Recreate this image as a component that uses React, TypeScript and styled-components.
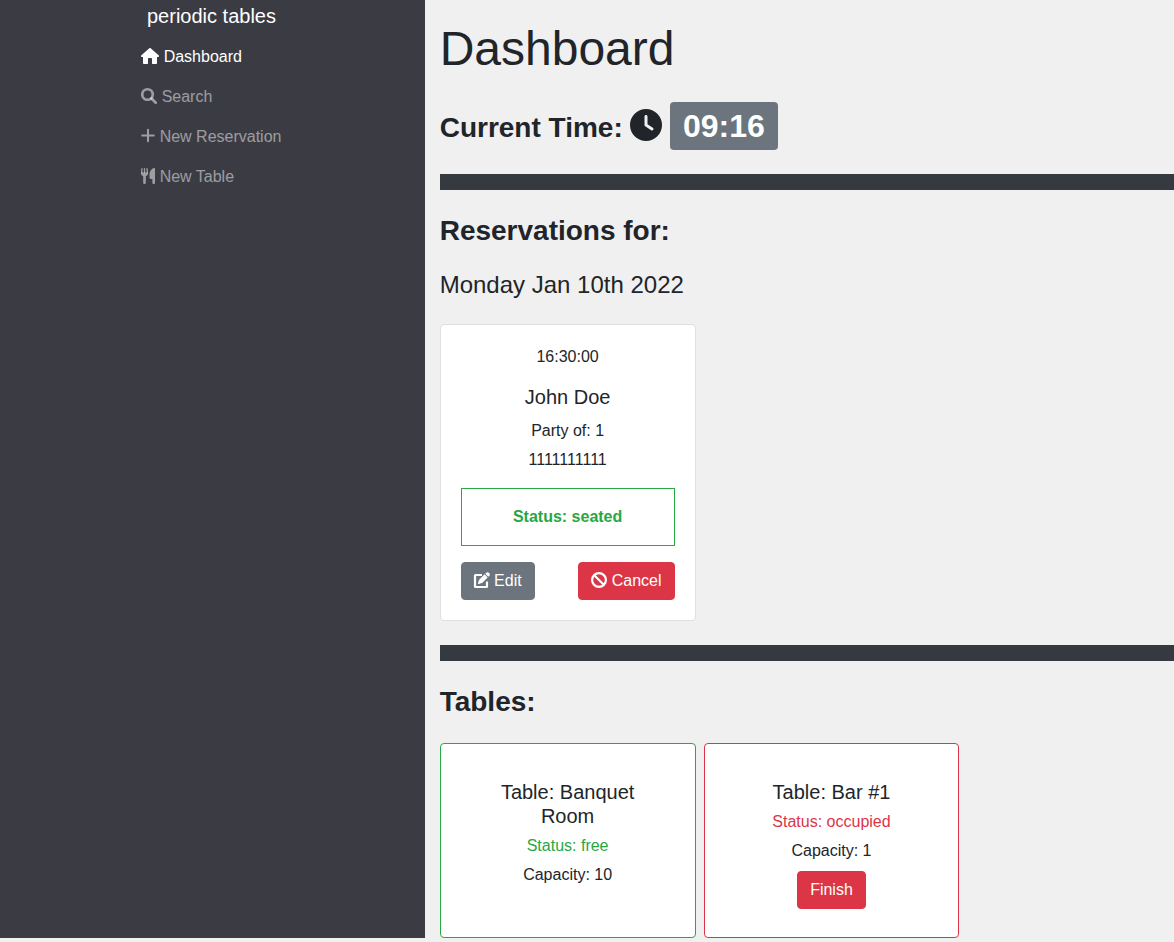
import React from "react";
import styled, { createGlobalStyle } from "styled-components";
import { FaClock } from "react-icons/fa6";

const GlobalStyle = createGlobalStyle`
  *, *::before, *::after { box-sizing: border-box; }
  body {
    margin: 0;
    background: #f0f0f0;
    color: #212529;
    font: 400 16px/1.5 "Liberation Sans", Arial, sans-serif;
    overflow: hidden;
  }
  h1, h2, h3, h4, h5, p { margin: 0; font-weight: 400; }
`;

const Page = styled.div`
  display: flex;
  align-items: flex-start;
  height: 942px;
  overflow: hidden;
`;

const Sidebar = styled.nav`
  flex: 0 0 424.66px;
  height: 938px;
  background: #3b3b44;
`;

const Brand = styled.div`
  padding: 1px 0 0 147px;
  height: 36px;
  font-size: 20px;
  line-height: 30px;
  color: #fff;
`;

const NavItem = styled.a<{ $active?: boolean }>`
  display: block;
  height: 40px;
  padding: 9px 0 7px 141.2px;
  line-height: 24px;
  white-space: pre;
  color: ${(p) => (p.$active ? "#fff" : "rgba(255, 255, 255, 0.5)")};
`;

const Icon = styled.span<{ $width?: number }>`
  display: inline-block;
  height: 1em;
  line-height: 1;
  vertical-align: -0.125em;

  svg {
    display: block;
    height: 1em;
    width: ${(p) => p.$width ?? 1}em;
    overflow: visible;
  }
`;

const Main = styled.main`
  flex: 1;
  min-width: 0;
  padding: 20px 0 0 15px;
`;

const Title = styled.h1`
  font-size: 48px;
  line-height: 57.6px;
`;

const TimeRow = styled.h3`
  display: flex;
  align-items: center;
  height: 48px;
  margin-top: 24.4px;
  font-size: 28px;
  font-weight: 700;
  white-space: pre;
`;

const TimeLabel = styled.span`
  padding-top: 4px;
  line-height: 34px;
  margin-right: 7.5px;
`;

const ClockIcon = styled(Icon)`
  font-size: 32px;
  margin: -2px 7.9px 0 0;
`;

const TimeBadge = styled.span`
  height: 48px;
  padding: 0 12.8px;
  border-radius: 4px;
  background: #6c757d;
  color: #fff;
  font-size: 32px;
  line-height: 48px;
`;

const Divider = styled.div`
  height: 16px;
  margin-top: 24px;
  background: #343a40;
`;

const SectionTitle = styled.h3`
  margin-top: 24px;
  font-size: 28px;
  font-weight: 700;
  line-height: 34px;
`;

const DateLine = styled.h4`
  margin: 22px 0 25px;
  font-size: 24px;
  line-height: 29px;
`;

const ReservationCard = styled.section`
  width: 255.9px;
  height: 297px;
  padding: 20px;
  border: 1px solid #dfdfdf;
  border-radius: 4px;
  background: #fff;
  text-align: center;
`;

const CardTitle = styled.h5`
  font-size: 20px;
  line-height: 24px;
  margin-bottom: 10px;
`;

const Time = styled.p`
  line-height: 24px;
  margin-bottom: 16px;
`;

const Line = styled.p<{ $color?: string }>`
  line-height: 24px;
  margin-bottom: 5px;
  color: ${(p) => p.$color ?? "inherit"};
`;

const StatusBox = styled.div`
  height: 58px;
  margin: 16px 0;
  border: 1px solid #28a745;
  color: #28a745;
  font-weight: 700;
  line-height: 56px;
`;

const Actions = styled.div`
  display: flex;
  justify-content: space-between;
`;

const Button = styled.button<{ $tone: "secondary" | "danger" }>`
  height: 38px;
  padding: 6px 12px;
  border: 1px solid ${(p) => (p.$tone === "danger" ? "#dc3545" : "#6c757d")};
  border-radius: 4px;
  background: ${(p) => (p.$tone === "danger" ? "#dc3545" : "#6c757d")};
  color: #fff;
  font: inherit;
  line-height: 24px;
  white-space: pre;
`;

const Tables = styled.div`
  display: flex;
  gap: 8px;
  margin-top: 24px;
`;

const TableCard = styled.section<{ $color: string }>`
  width: 255.9px;
  height: 195px;
  padding: 36px 44px 0;
  border: 1px solid ${(p) => p.$color};
  border-radius: 4px;
  background: #fff;
  text-align: center;

  ${CardTitle} {
    margin-bottom: 6px;
  }

  ${Button} {
    margin-top: 3px;
  }
`;

const GREEN = "#28a745";
const RED = "#dc3545";

const HouseIcon = () => (
  <svg viewBox="0 0 576 512" fill="currentColor">
    <path d="M288 0c8 0 15 3 21 8L564 232c8 7 12 16 12 24 0 18-14 32-32 32h-32V480c0 18-14 32-32 32H368c-9 0-16-7-16-16V352c0-18-14-32-32-32h-64c-18 0-32 14-32 32V496c0 9-7 16-16 16H96c-18 0-32-14-32-32V288H32c-18 0-32-14-32-32 0-9 4-18 12-24L267 8c6-5 13-8 21-8z" />
  </svg>
);

const SearchIcon = () => (
  <svg viewBox="0 0 512 512" fill="none" stroke="currentColor">
    <circle cx="208" cy="208" r="168" strokeWidth="86" />
    <path d="M330 330L472 472" strokeWidth="86" strokeLinecap="round" />
  </svg>
);

const PlusIcon = () => (
  <svg viewBox="0 0 448 512" fill="none" stroke="currentColor">
    <path d="M224 56V424M40 240H408" strokeWidth="66" strokeLinecap="round" />
  </svg>
);

const UtensilsIcon = () => (
  <svg viewBox="0 0 448 512" fill="currentColor">
    <path
      d="M30 18L22 150M112 18V150M194 18L202 150"
      fill="none"
      stroke="currentColor"
      strokeWidth="42"
      strokeLinecap="round"
    />
    <path d="M0 140C-10 206 28 244 70 254V472c0 22 18 40 42 40s42-18 42-40V254C196 244 234 206 224 140z" />
    <path d="M448 32V472c0 22-18 40-42 40s-42-18-42-40V352h-44c-26 0-48-22-48-48V208C272 80 380 0 416 0c18 0 32 14 32 32z" />
  </svg>
);

const EditIcon = () => (
  <svg viewBox="0 0 512 512" fill="currentColor">
    <path
      d="M256 96H48q-16 0-16 16V464q0 16 16 16H400q16 0 16-16V304"
      fill="none"
      stroke="currentColor"
      strokeWidth="70"
    />
    <path d="M490 40c22 22 22 58 0 80l-30 30-98-98 30-30c22-22 58-22 80 0zM172 242L340 74l98 98-168 168c-6 6-14 11-22 13l-89 30c-20 5-35-12-30-31l30-88c3-8 7-16 13-22z" />
  </svg>
);

const BanIcon = () => (
  <svg viewBox="0 0 512 512" fill="none" stroke="currentColor" strokeWidth="70">
    <circle cx="256" cy="256" r="221" />
    <path d="M104 104L408 408" />
  </svg>
);

const navItems = [
  { label: "Dashboard", icon: <HouseIcon />, width: 1.125, active: true },
  { label: "Search", icon: <SearchIcon />, width: 1 },
  { label: "New Reservation", icon: <PlusIcon />, width: 0.875 },
  { label: "New Table", icon: <UtensilsIcon />, width: 0.875 },
];

export default function App() {
  return (
    <>
      <GlobalStyle />
      <Page>
        <Sidebar>
          <Brand>periodic tables</Brand>
          {navItems.map((item) => (
            <NavItem key={item.label} $active={item.active}>
              <Icon $width={item.width}>{item.icon}</Icon> {item.label}
            </NavItem>
          ))}
        </Sidebar>
        <Main>
          <Title>Dashboard</Title>
          <TimeRow>
            <TimeLabel>Current Time:</TimeLabel>
            <ClockIcon>
              <FaClock />
            </ClockIcon>
            <TimeBadge>09:16</TimeBadge>
          </TimeRow>
          <Divider />
          <SectionTitle>Reservations for:</SectionTitle>
          <DateLine>Monday Jan 10th 2022</DateLine>
          <ReservationCard>
            <Time>16:30:00</Time>
            <CardTitle>John Doe</CardTitle>
            <Line>Party of: 1</Line>
            <Line>1111111111</Line>
            <StatusBox>Status: seated</StatusBox>
            <Actions>
              <Button $tone="secondary">
                <Icon>
                  <EditIcon />
                </Icon>{" "}
                Edit
              </Button>
              <Button $tone="danger">
                <Icon>
                  <BanIcon />
                </Icon>{" "}
                Cancel
              </Button>
            </Actions>
          </ReservationCard>
          <Divider />
          <SectionTitle>Tables:</SectionTitle>
          <Tables>
            <TableCard $color={GREEN}>
              <CardTitle>Table: Banquet Room</CardTitle>
              <Line $color={GREEN}>Status: free</Line>
              <Line>Capacity: 10</Line>
            </TableCard>
            <TableCard $color={RED}>
              <CardTitle>Table: Bar #1</CardTitle>
              <Line $color={RED}>Status: occupied</Line>
              <Line>Capacity: 1</Line>
              <Button $tone="danger">Finish</Button>
            </TableCard>
          </Tables>
        </Main>
      </Page>
    </>
  );
}
